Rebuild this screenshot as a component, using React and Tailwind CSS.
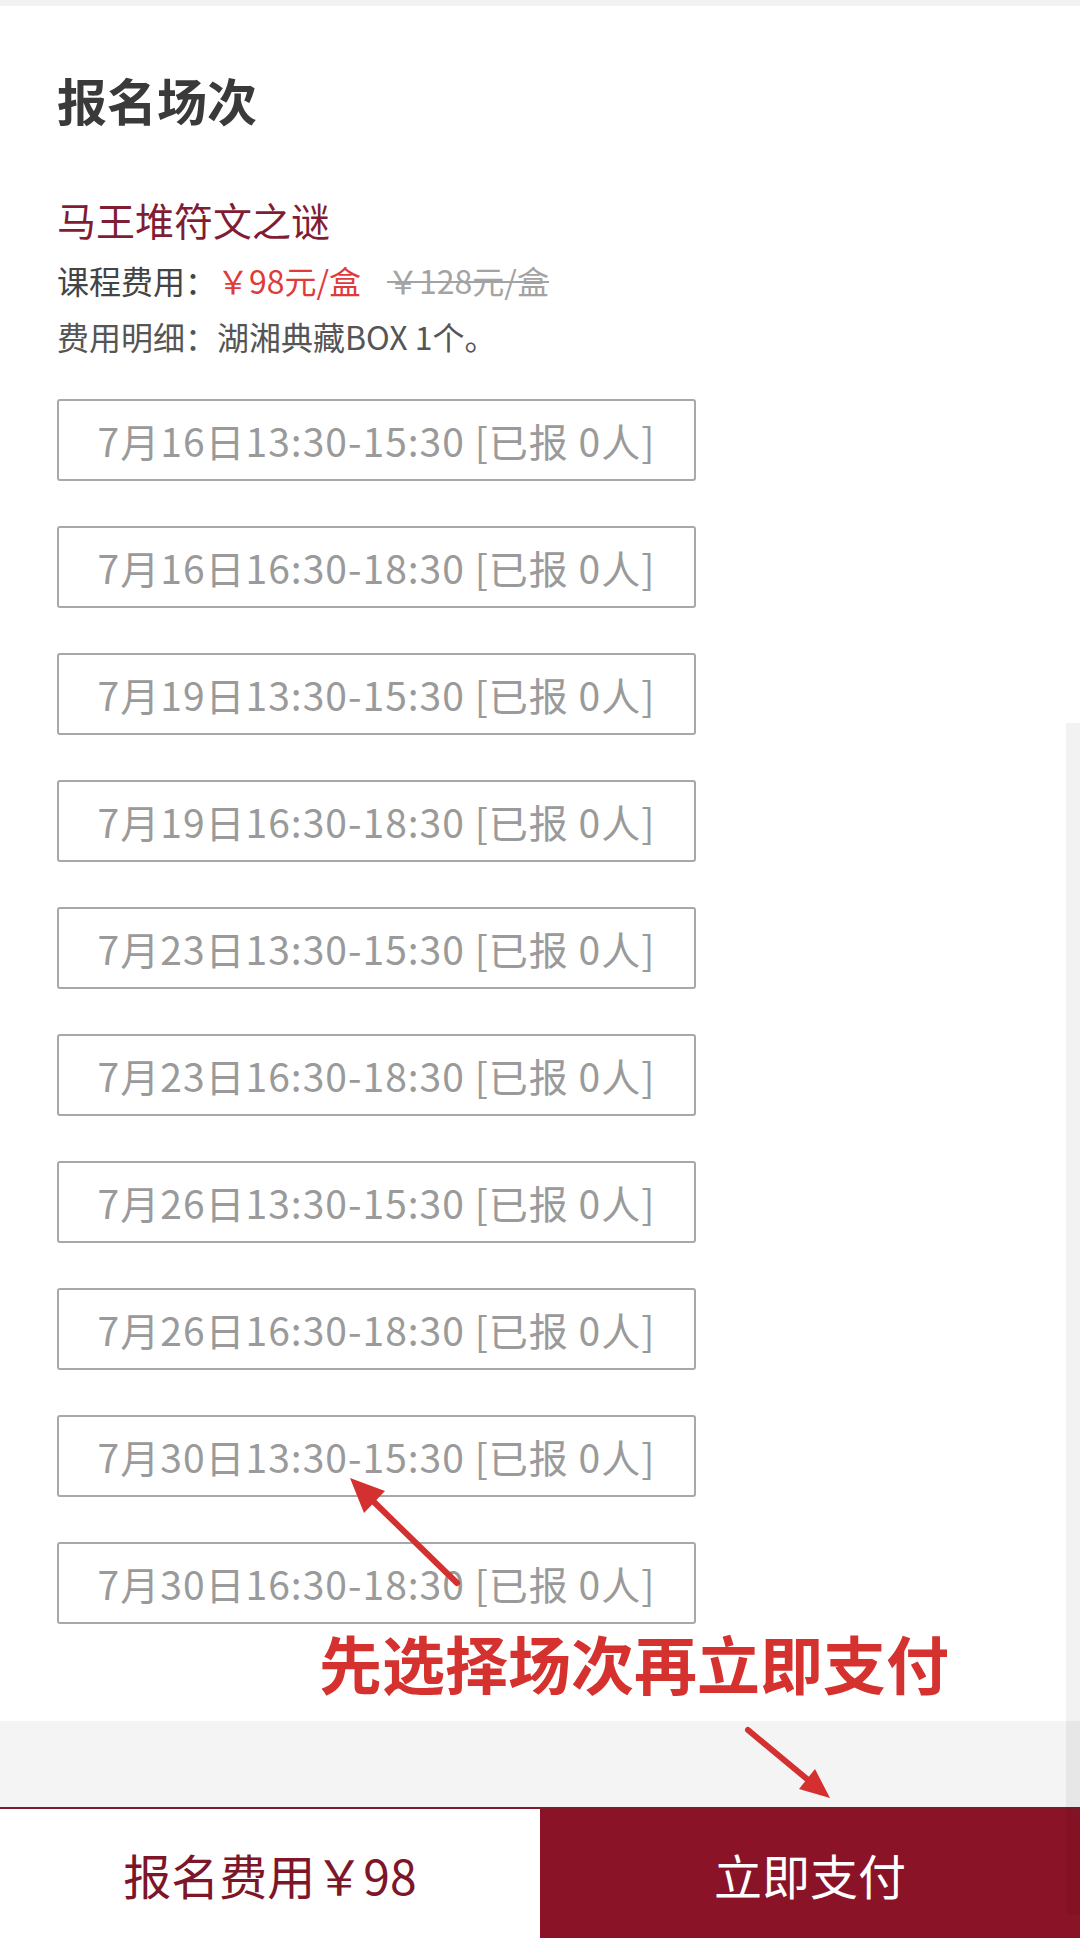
const sessions = [
  "7月16日13:30-15:30 [已报 0人]",
  "7月16日16:30-18:30 [已报 0人]",
  "7月19日13:30-15:30 [已报 0人]",
  "7月19日16:30-18:30 [已报 0人]",
  "7月23日13:30-15:30 [已报 0人]",
  "7月23日16:30-18:30 [已报 0人]",
  "7月26日13:30-15:30 [已报 0人]",
  "7月26日16:30-18:30 [已报 0人]",
  "7月30日13:30-15:30 [已报 0人]",
  "7月30日16:30-18:30 [已报 0人]",
];

export default function App() {
  return (
    <div className="relative w-[1080px] h-[1938px] flex flex-col bg-white font-['Noto_Sans_CJK_SC',sans-serif] overflow-hidden">
      <div className="h-[6px] bg-[#f2f2f2]" />

      <div className="flex-1 px-[57px] flex flex-col">
        <h1 className="mt-[63px] h-[60px] leading-[60px] text-[50px] font-bold text-[#3a3a3a]">报名场次</h1>

        <div className="mt-[65px] h-[50px] leading-[50px] text-[39px] text-[#7f1d34]">马王堆符文之谜</div>

        <div className="mt-[14px] h-[44px] leading-[44px] text-[32px] text-[#444] flex">
          <span>课程费用：</span>
          <span className="text-[#e03b3b]">￥98元/盒</span>
          <span className="ml-[26px] text-[#a3a3a3] line-through decoration-[2px]">￥128元/盒</span>
        </div>

        <div className="mt-[12px] h-[44px] leading-[44px] text-[32px] text-[#555]">费用明细：湖湘典藏BOX 1个。</div>

        <div className="mt-[41px] flex flex-col gap-[45px]">
          {sessions.map((s) => (
            <button
              key={s}
              className="w-[639px] h-[82px] border-2 border-[#a8a8a8] rounded-[3px] flex items-center justify-center text-[39px] tracking-[1px] text-[#9a9a9a]"
            >
              {s}
            </button>
          ))}
        </div>

        <div className="mt-[3px] ml-[262px] h-[70px] leading-[70px] text-[63px] font-bold text-[#d4312f]">
          先选择场次再立即支付
        </div>
      </div>

      <div className="h-[86px] bg-[#f4f4f4]" />

      <div className="h-[131px] flex border-t-2 border-[#7d1b2c]">
        <div className="w-1/2 flex items-center justify-center text-[48px] text-[#7d1628]">报名费用￥98</div>
        <div className="w-1/2 flex items-center justify-center bg-[#8b1327] text-[48px] text-white">立即支付</div>
      </div>

      {/* scroll track on the right */}
      <div className="absolute right-0 top-[723px] w-[14px] h-[1192px] bg-black/[0.05]" />

      {/* annotation arrows */}
      <svg className="absolute inset-0 pointer-events-none" width="1080" height="1938" viewBox="0 0 1080 1938">
        <line x1="457" y1="1583" x2="374" y2="1502" stroke="#d3302f" strokeWidth="6" strokeLinecap="round" />
        <polygon points="350,1478 385,1491 364,1513" fill="#d3302f" />
        <line x1="748" y1="1730" x2="807" y2="1779" stroke="#d3302f" strokeWidth="6" strokeLinecap="round" />
        <polygon points="830,1798 799,1789 815,1769" fill="#d3302f" />
      </svg>
    </div>
  );
}
